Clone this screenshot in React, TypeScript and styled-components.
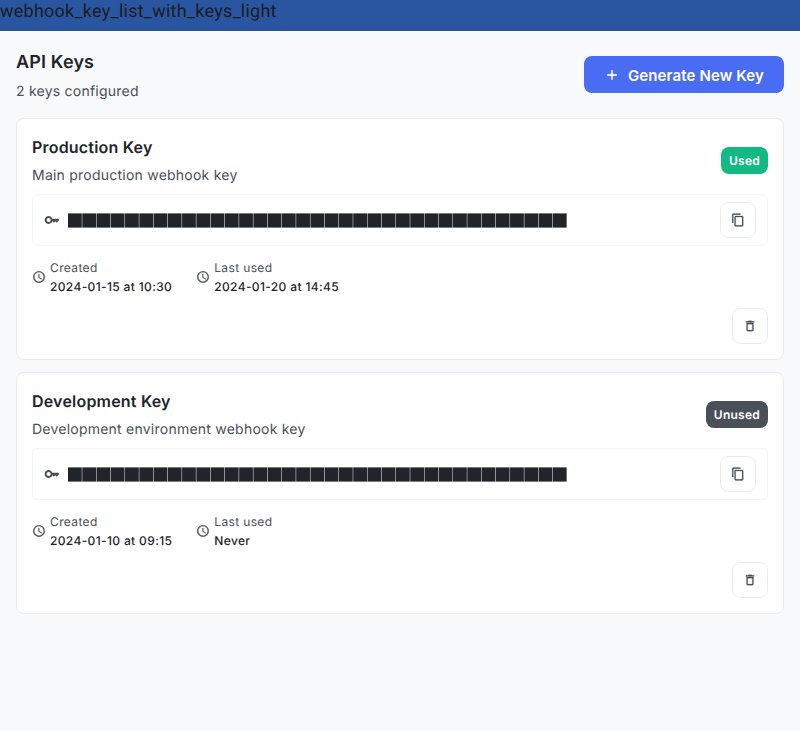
import React from 'react';
import styled, { createGlobalStyle } from 'styled-components';
import { MdAccessTime, MdAdd, MdContentCopy, MdDeleteOutline, MdKey } from 'react-icons/md';

const GlobalStyle = createGlobalStyle`
  *, *::before, *::after { box-sizing: border-box; }
  body { margin: 0; background: #f8f9fb; font-family: Inter, "Liberation Sans", sans-serif; color: #212529; text-rendering: geometricPrecision; }
  h1, h2, p { margin: 0; }
  button { font: inherit; margin: 0; cursor: pointer; }
`;

const Page = styled.div`
  min-height: 731px;
  background: #f8f9fb;
`;

const TopBar = styled.div`
  height: 31px;
  background: #2a55a0;
  color: #1b1c22;
  font: 400 18px/24px Roboto, sans-serif;
  letter-spacing: 0.25px;
`;

const Content = styled.main`
  padding: 16px;
`;

const Header = styled.header`
  display: flex;
  align-items: center;
  justify-content: space-between;
  height: 55px;
  margin-bottom: 16px;
`;

const PageTitle = styled.h1`
  padding-top: 1px;
  font-size: 18px;
  font-weight: 600;
  line-height: 30px;
  letter-spacing: 0.15px;
`;

const Subtitle = styled.p<{ $gap: number }>`
  margin-top: ${(p) => p.$gap}px;
  color: #495057;
  font-size: 14px;
  line-height: 20px;
  letter-spacing: 0.23px;
`;

const PrimaryButton = styled.button`
  display: flex;
  align-items: center;
  gap: 8px;
  height: 37px;
  padding: 1px 20px 0;
  border: 0;
  border-radius: 8px;
  background: #4a6cf2;
  color: #fff;
  && { font-size: 15px; font-weight: 600; }
  letter-spacing: 0.12px;

  svg { margin-top: -1px; stroke-width: 0; }
  path:not([fill='none']) { stroke: currentColor; stroke-width: 0.5px; }
`;

const CardList = styled.div`
  display: flex;
  flex-direction: column;
  gap: 12px;
`;

const Card = styled.section`
  height: 242px;
  padding: 15px;
  border: 1px solid #e9ecef;
  border-radius: 8px;
  background: #fff;
`;

const CardHeader = styled.div`
  display: flex;
  align-items: center;
  justify-content: space-between;
  height: 52px;
  margin-bottom: 8px;
`;

const CardTitle = styled.h2`
  font-size: 16px;
  font-weight: 600;
  line-height: 26px;
  letter-spacing: 0.2px;
`;

const Badge = styled.span<{ $used: boolean }>`
  height: 27px;
  padding: 0 8px;
  border-radius: 8px;
  background: ${(p) => (p.$used ? '#12b981' : '#495057')};
  color: #fff;
  font-size: 12px;
  font-weight: 600;
  line-height: 27px;
  letter-spacing: 0.25px;
`;

const KeyBox = styled.div`
  display: flex;
  align-items: center;
  height: 52px;
  padding: 0 11px;
  border: 1px solid #f3f4f6;
  border-radius: 6px;
  color: #495057;
`;

const MaskDrawing = styled.svg`
  display: block;
  margin: 0 auto 0 8px;
`;

const IconButton = styled.button`
  display: flex;
  align-items: center;
  justify-content: center;
  width: 36px;
  height: 36px;
  padding: 0;
  border: 1px solid #e9ecef;
  border-radius: 8px;
  background: #fff;
  color: #495057;

  svg { stroke-width: 0; }
  path:not([fill='none']) { stroke: currentColor; stroke-width: 0.4px; }
`;

const MetaRow = styled.div`
  display: flex;
  gap: 24px;
  height: 38px;
  margin: 12px 0;
`;

const MetaItem = styled.div`
  display: flex;
  align-items: center;
  gap: 4px;
  color: #495057;

  svg { stroke-width: 0; }
  path:not([fill='none']) { stroke: currentColor; stroke-width: 0.4px; }
`;

const MetaLabel = styled.p`
  font-size: 12px;
  line-height: 19px;
  letter-spacing: 0.36px;
`;

const MetaValue = styled(MetaLabel)`
  color: #212529;
  font-weight: 500;
`;

const Actions = styled.div`
  display: flex;
  justify-content: flex-end;
`;

interface ApiKey {
  name: string;
  description: string;
  used: boolean;
  created: string;
  lastUsed: string;
}

const keys: ApiKey[] = [
  { name: 'Production Key', description: 'Main production webhook key', used: true, created: '2024-01-15 at 10:30', lastUsed: '2024-01-20 at 14:45' },
  { name: 'Development Key', description: 'Development environment webhook key', used: false, created: '2024-01-10 at 09:15', lastUsed: 'Never' },
];

const MaskedKey = () => (
  <MaskDrawing width="500" height="15" viewBox="0 0 500 15" aria-label="Hidden key">
    {Array.from({ length: 35 }, (_, i) => (
      <rect key={i} x={i * 14.26} y="0.4" width="13.8" height="14.2" fill="#212529" />
    ))}
  </MaskDrawing>
);

const Meta = ({ label, value }: { label: string; value: string }) => (
  <MetaItem>
    <MdAccessTime size={14} />
    <div>
      <MetaLabel>{label}</MetaLabel>
      <MetaValue>{value}</MetaValue>
    </div>
  </MetaItem>
);

const KeyCard = ({ item }: { item: ApiKey }) => (
  <Card>
    <CardHeader>
      <div>
        <CardTitle>{item.name}</CardTitle>
        <Subtitle $gap={6}>{item.description}</Subtitle>
      </div>
      <Badge $used={item.used}>{item.used ? 'Used' : 'Unused'}</Badge>
    </CardHeader>
    <KeyBox>
      <MdKey size={16} />
      <MaskedKey />
      <IconButton aria-label="Copy key"><MdContentCopy size={14} /></IconButton>
    </KeyBox>
    <MetaRow>
      <Meta label="Created" value={item.created} />
      <Meta label="Last used" value={item.lastUsed} />
    </MetaRow>
    <Actions>
      <IconButton aria-label="Delete key"><MdDeleteOutline size={14} /></IconButton>
    </Actions>
  </Card>
);

export default function App() {
  return (
    <Page>
      <GlobalStyle />
      <TopBar>webhook_key_list_with_keys_light</TopBar>
      <Content>
        <Header>
          <div>
            <PageTitle>API Keys</PageTitle>
            <Subtitle $gap={4}>2 keys configured</Subtitle>
          </div>
          <PrimaryButton><MdAdd size={16} />Generate New Key</PrimaryButton>
        </Header>
        <CardList>
          {keys.map((item) => <KeyCard key={item.name} item={item} />)}
        </CardList>
      </Content>
    </Page>
  );
}
